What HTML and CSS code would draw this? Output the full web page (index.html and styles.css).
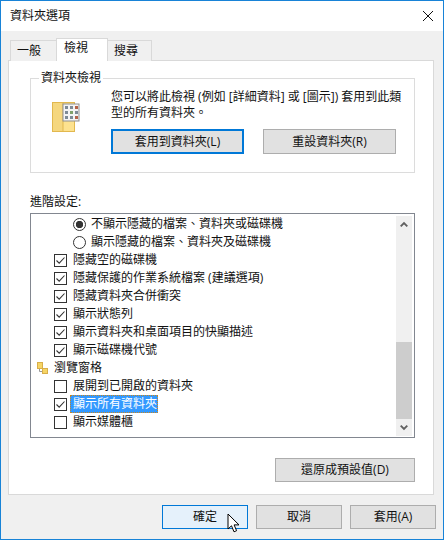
FILE: index.html
```html
<!DOCTYPE html>
<html lang="zh-TW">
<head>
  <meta charset="UTF-8">
  <title>資料夾選項</title>
  <link rel="stylesheet" href="styles.css">
</head>
<body>
  <div class="dialog">
    <header class="titlebar">
      <span class="title">資料夾選項</span>
      <svg class="close" width="10" height="10" viewBox="0 0 10 10"><path d="M0 0L10 10M10 0L0 10" stroke="#111" stroke-width="1" fill="none"/></svg>
    </header>

    <div class="tabs">
      <div class="tab tab-first">一般</div>
      <div class="tab tab-active">檢視</div>
      <div class="tab">搜尋</div>
    </div>

    <div class="panel">
      <fieldset class="group">
        <legend class="group-label">資料夾檢視</legend>
        <svg class="folder" width="28" height="32" viewBox="0 0 28 32">
          <rect x="0.5" y="0.5" width="22" height="29" fill="#f5d77f" stroke="#e2b84e"/>
          <rect x="11" y="0.5" width="11.5" height="29" fill="#fde28f" stroke="#e2b84e"/>
          <rect x="11" y="2" width="16" height="17" fill="#f4f4f4" stroke="#8f8f8f"/>
          <g fill="#7d8a96">
            <rect x="13" y="4" width="3" height="3"/><rect x="18" y="4" width="3" height="3"/><rect x="23" y="4" fill="#b5624a" width="3" height="3"/>
            <rect x="13" y="9" width="3" height="3"/><rect x="18" y="9" fill="#7fa06a" width="3" height="3"/><rect x="23" y="9" width="3" height="3"/>
            <rect x="13" y="14" width="3" height="3"/><rect x="18" y="14" width="3" height="3"/><rect x="23" y="14" fill="#b5624a" width="3" height="3"/>
          </g>
        </svg>
        <div class="group-body">
          <p class="group-text">您可以將此檢視 (例如 [詳細資料] 或 [圖示]) 套用到此類型的所有資料夾。</p>
          <div class="group-buttons">
            <button class="btn btn-wide btn-focus">套用到資料夾(L)</button>
            <button class="btn btn-wide">重設資料夾(R)</button>
          </div>
        </div>
      </fieldset>

      <div class="adv-label">進階設定:</div>

      <div class="listbox">
        <ul class="tree">
          <li class="row row-sub"><span class="radio radio-on"></span>不顯示隱藏的檔案、資料夾或磁碟機</li>
          <li class="row row-sub"><span class="radio"></span>顯示隱藏的檔案、資料夾及磁碟機</li>
          <li class="row"><span class="check check-on"></span>隱藏空的磁碟機</li>
          <li class="row"><span class="check check-on"></span>隱藏保護的作業系統檔案 (建議選項)</li>
          <li class="row"><span class="check check-on"></span>隱藏資料夾合併衝突</li>
          <li class="row"><span class="check check-on"></span>顯示狀態列</li>
          <li class="row"><span class="check check-on"></span>顯示資料夾和桌面項目的快顯描述</li>
          <li class="row"><span class="check check-on"></span>顯示磁碟機代號</li>
          <li class="row row-head">
            <svg class="tree-icon" width="11" height="12" viewBox="0 0 11 12">
              <path d="M2.5 7V9.5H5" stroke="#999" fill="none"/>
              <rect x="0.5" y="0.5" width="5" height="6" fill="#f6d565" stroke="#d8ae4a"/>
              <rect x="5.5" y="6.5" width="5" height="5" fill="#f6d565" stroke="#d8ae4a"/>
            </svg>瀏覽窗格
          </li>
          <li class="row"><span class="check"></span>展開到已開啟的資料夾</li>
          <li class="row"><span class="check check-on"></span><span class="selected">顯示所有資料夾</span></li>
          <li class="row"><span class="check"></span>顯示媒體櫃</li>
        </ul>
        <div class="scrollbar">
          <svg class="arrow" width="17" height="17" viewBox="0 0 17 17"><path d="M5 10.5L8.5 7L12 10.5" stroke="#606060" stroke-width="2" fill="none"/></svg>
          <div class="track"><div class="thumb"></div></div>
          <svg class="arrow" width="17" height="17" viewBox="0 0 17 17"><path d="M5 6.5L8.5 10L12 6.5" stroke="#606060" stroke-width="2" fill="none"/></svg>
        </div>
      </div>

      <div class="restore-row">
        <button class="btn btn-restore">還原成預設值(D)</button>
      </div>
    </div>

    <footer class="footer">
      <button class="btn btn-hover">確定</button>
      <button class="btn">取消</button>
      <button class="btn">套用(A)</button>
    </footer>

    <svg class="cursor" width="14" height="21" viewBox="0 0 14 21">
      <path d="M1 1V16L4.5 12.8L7 18.8L9.6 17.7L7.1 11.9H12Z" fill="#fff" stroke="#000" stroke-width="1"/>
    </svg>
  </div>
</body>
</html>
```

FILE: styles.css
```css
* {
  margin: 0;
  padding: 0;
  box-sizing: border-box;
}

body {
  width: 444px;
  height: 540px;
  overflow: hidden;
  font-family: "Open Sans", "Noto Sans CJK TC", sans-serif;
  font-size: 12px;
  line-height: 16px;
  color: #111;
}

.dialog {
  position: relative;
  display: flex;
  flex-direction: column;
  width: 444px;
  height: 540px;
  border: 1px solid #1883d7;
  background: #f0f0f0;
}

/* Title bar */
.titlebar {
  display: flex;
  align-items: center;
  justify-content: space-between;
  height: 30px;
  padding: 0 10px 0 9px;
  background: #fff;
}

.title {
  font-size: 12px;
}

/* Tabs */
.tabs {
  display: flex;
  align-items: flex-end;
  height: 23px;
  margin-top: 7px;
  padding-left: 9px;
  margin-bottom: -1px;
  position: relative;
  z-index: 1;
}

.tab {
  width: 45px;
  height: 21px;
  padding: 2px 0 0 6px;
  background: #f0f0f0;
  border: 1px solid #d9d9d9;
  border-bottom: none;
}

.tab + .tab {
  margin-left: -1px;
}

.tab-first {
  width: 47px;
}

.tab-active {
  width: 52px;
  height: 23px;
  padding: 1px 0 0 7px;
  background: #fff;
}

/* Panel */
.panel {
  height: 435px;
  margin: 0 9px 0 7px;
  padding: 17px 18px 0 21px;
  background: #fff;
  border: 1px solid #d9d9d9;
}

.group {
  position: relative;
  display: flex;
  height: 95px;
  padding: 10px 0 0 21px;
  border: 1px solid #dcdcdc;
}

.group-label {
  position: absolute;
  top: -9px;
  left: 8px;
  padding: 0 2px;
  background: #fff;
}

.folder {
  flex: none;
  margin: 13px 31px 0 0;
}

.group-body {
  display: block;
  flex: 1;
  min-width: 0;
}

.group-text {
  height: 40px;
  padding-right: 8px;
}

.group-buttons {
  display: flex;
  gap: 19px;
}

/* Buttons */
.btn {
  width: 86px;
  height: 24px;
  font: inherit;
  color: #111;
  background: #e1e1e1;
  border: 1px solid #adadad;
}

.btn-wide {
  width: 133px;
  height: 25px;
}

.btn-focus {
  border: 2px solid #0078d7;
}

.btn-hover {
  background: #e5f1fb;
  border-color: #0078d7;
}

.btn-restore {
  width: 140px;
}

/* Advanced settings */
.adv-label {
  height: 16px;
  margin: 21px 0 3px;
  line-height: 16px;
}

.listbox {
  display: flex;
  height: 225px;
  padding: 1px;
  background: #fff;
  border: 1px solid #828790;
}

.tree {
  flex: 1;
  min-width: 0;
  list-style: none;
}

.row {
  display: flex;
  align-items: center;
  height: 18px;
  padding-left: 22px;
  white-space: nowrap;
}

.row-sub {
  padding-left: 41px;
}

.row-head {
  padding-left: 4px;
}

.tree-icon {
  margin-right: 6px;
  margin-left: 1px;
}

.check {
  flex: none;
  width: 13px;
  height: 13px;
  margin-right: 6px;
  border: 1px solid #333;
  background: #fff;
}

.check-on {
  background: center / 11px 11px no-repeat url("data:image/svg+xml,%3Csvg xmlns='http://www.w3.org/2000/svg' viewBox='0 0 11 11'%3E%3Cpath d='M1.5 5.5L4.2 8.2L9.5 2.5' stroke='%23333' stroke-width='1.1' fill='none'/%3E%3C/svg%3E");
}

.radio {
  flex: none;
  width: 13px;
  height: 13px;
  margin-right: 5px;
  border: 1px solid #333;
  border-radius: 50%;
  background: #fff;
}

.radio-on {
  background: radial-gradient(circle, #333 3.4px, #fff 4px);
}

.selected {
  height: 18px;
  margin-left: -3px;
  padding: 0 1px 0 3px;
  line-height: 18px;
  color: #fff;
  background: #3399ff;
  outline: 1px dotted #c9861e;
  outline-offset: -1px;
}

/* Scrollbar */
.scrollbar {
  display: flex;
  flex-direction: column;
  flex: none;
  width: 16px;
  margin: 1px 1px 0 0;
  background: #f0f0f0;
}

.arrow {
  flex: none;
  width: 16px;
}

.track {
  display: flex;
  flex: 1;
  flex-direction: column;
  justify-content: flex-end;
}

.thumb {
  height: 77px;
  background: #cdcdcd;
}

.restore-row {
  display: flex;
  justify-content: flex-end;
  margin-top: 20px;
}

/* Footer */
.footer {
  display: flex;
  justify-content: flex-end;
  gap: 8px;
  margin-top: 10px;
  padding-right: 7px;
}

.cursor {
  position: absolute;
  top: 512px;
  left: 226px;
}
```
